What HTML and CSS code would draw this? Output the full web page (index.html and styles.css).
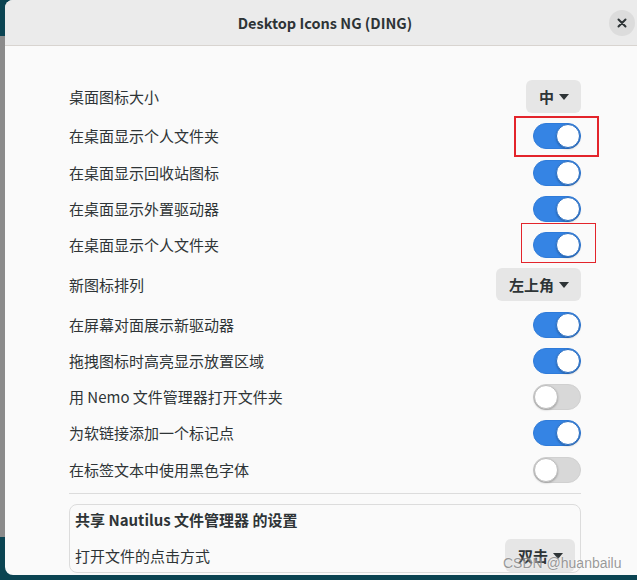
FILE: index.html
```html
<!DOCTYPE html>
<html lang="zh-CN">
<head>
<meta charset="utf-8">
<title>Desktop Icons NG (DING)</title>
<link rel="stylesheet" href="styles.css">
</head>
<body>
<div class="window">
  <header class="titlebar">
    <span></span>
    <span class="title">Desktop Icons NG (DING)</span>
    <button class="close" aria-label="关闭">
      <svg width="10" height="10" viewBox="0 0 10 10"><path d="M1.5 1.5 L8.5 8.5 M8.5 1.5 L1.5 8.5" stroke="#2e3436" stroke-width="2" stroke-linecap="round"/></svg>
    </button>
  </header>
  <main class="content">
    <div class="row"><span class="label">桌面图标大小</span><span class="dropdown">中<i class="arrow"></i></span></div>
    <div class="row"><span class="label">在桌面显示个人文件夹</span><span class="switch on"><span class="knob"></span></span></div>
    <div class="row"><span class="label">在桌面显示回收站图标</span><span class="switch on"><span class="knob"></span></span></div>
    <div class="row"><span class="label">在桌面显示外置驱动器</span><span class="switch on"><span class="knob"></span></span></div>
    <div class="row"><span class="label">在桌面显示个人文件夹</span><span class="switch on"><span class="knob"></span></span></div>
    <div class="row"><span class="label">新图标排列</span><span class="dropdown">左上角<i class="arrow"></i></span></div>
    <div class="row"><span class="label">在屏幕对面展示新驱动器</span><span class="switch on"><span class="knob"></span></span></div>
    <div class="row"><span class="label">拖拽图标时高亮显示放置区域</span><span class="switch on"><span class="knob"></span></span></div>
    <div class="row"><span class="label">用 Nemo 文件管理器打开文件夹</span><span class="switch"><span class="knob"></span></span></div>
    <div class="row"><span class="label">为软链接添加一个标记点</span><span class="switch on"><span class="knob"></span></span></div>
    <div class="row"><span class="label">在标签文本中使用黑色字体</span><span class="switch"><span class="knob"></span></span></div>
    <hr class="sep">
    <section class="frame">
      <div class="frame-title">共享 Nautilus 文件管理器 的设置</div>
      <div class="row"><span class="label">打开文件的点击方式</span><span class="dropdown">双击<i class="arrow"></i></span></div>
    </section>
  </main>
  <div class="mark mark-a"></div>
  <div class="mark mark-b"></div>
</div>
<div class="watermark">CSDN @huanbailu</div>
</body>
</html>
```

FILE: styles.css
```css
html, body {
  margin: 0;
  padding: 0;
}
body {
  width: 637px;
  height: 580px;
  overflow: hidden;
  position: relative;
  background:
    linear-gradient(#8b8b8b, #8b8b8b) 0 36px / 5px 501px no-repeat,
    #0b4452;
  font-family: "Noto Sans CJK SC", "Noto Sans", sans-serif;
  color: #2e3436;
}
.window {
  position: relative;
  margin-left: 5px;
  width: 640px;
  height: 575px;
  border-radius: 8px;
  overflow: hidden;
  background: #fafafa;
  display: flex;
  flex-direction: column;
}
.titlebar {
  height: 45px;
  flex: none;
  border-bottom: 1px solid #d8d4d0;
  background: #ebebeb;
  display: grid;
  grid-template-columns: 1fr auto 1fr;
  align-items: center;
}
.title {
  font-weight: bold;
  font-size: 14.5px;
  color: #2e3436;
}
.close {
  justify-self: end;
  margin-right: 10px;
  width: 26px;
  height: 26px;
  border: 0;
  border-radius: 50%;
  background: #dcdcdc;
  padding: 0;
  display: flex;
  align-items: center;
  justify-content: center;
}
.content {
  padding: 34px 64px 0;
  display: flex;
  flex-direction: column;
  gap: 10.25px;
}
.row {
  display: flex;
  align-items: center;
  justify-content: space-between;
}
.label {
  font-size: 15px;
  line-height: 20px;
}
.dropdown {
  height: 33px;
  box-sizing: border-box;
  padding: 0 12px 0 13px;
  border-radius: 6px;
  background: #e6e6e6;
  display: flex;
  align-items: center;
  gap: 5px;
  font-size: 15px;
  font-weight: bold;
  color: #2e3436;
}
.arrow {
  width: 0;
  height: 0;
  border-left: 5.5px solid transparent;
  border-right: 5.5px solid transparent;
  border-top: 6px solid #2e3436;
}
.switch {
  width: 48px;
  height: 26px;
  box-sizing: border-box;
  border-radius: 13px;
  background: #d8d8d8;
  border: 1px solid #d0d0d0;
  display: flex;
  align-items: center;
  justify-content: flex-start;
}
.switch.on {
  background: #3584e4;
  border-color: #2f7bd9;
  justify-content: flex-end;
}
.knob {
  width: 24px;
  height: 24px;
  box-sizing: border-box;
  border-radius: 50%;
  background: #ffffff;
  border: 1px solid #bdbdbd;
  box-shadow: 0 1px 2px rgba(0, 0, 0, 0.25);
}
.switch.on .knob {
  border-color: #2a6fc4;
}
.sep {
  margin: 0;
  border: 0;
  border-top: 1px solid #dcdcdc;
}
.frame {
  border: 1px solid #dcdcdc;
  border-radius: 8px;
  padding: 4px 5px 0 5px;
  display: flex;
  flex-direction: column;
  gap: 8px;
}
.frame-title {
  font-size: 15px;
  font-weight: bold;
  line-height: 22px;
}
.mark {
  position: absolute;
  box-sizing: border-box;
  border: 2px solid #e3242b;
}
.mark-a {
  left: 509px;
  top: 116px;
  width: 85px;
  height: 41px;
}
.mark-b {
  left: 516px;
  top: 223px;
  width: 75px;
  height: 40px;
  border-width: 1px;
}
.watermark {
  position: absolute;
  left: 503px;
  top: 555px;
  font-family: "Liberation Sans", Arial, sans-serif;
  font-size: 14px;
  color: rgba(120, 120, 120, 0.75);
  text-shadow: 0 0 2px rgba(255, 255, 255, 0.8);
}
```
